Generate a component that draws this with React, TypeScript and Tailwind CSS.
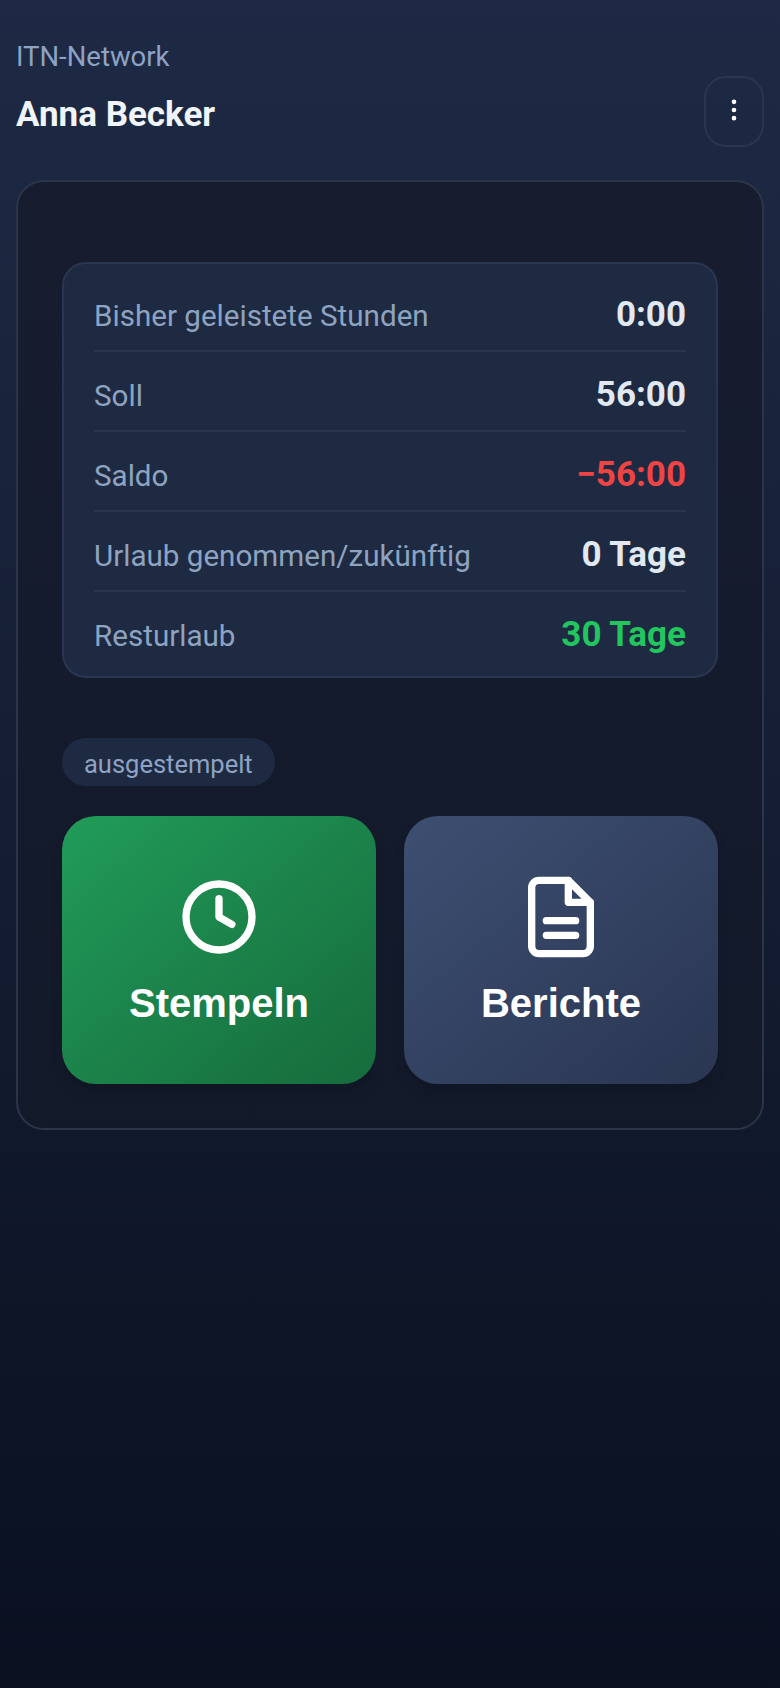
import React from 'react';
import { EllipsisVertical } from 'lucide-react';

const rows = [
  { label: 'Bisher geleistete Stunden', value: '0:00', color: 'text-[#e2e8f0]' },
  { label: 'Soll', value: '56:00', color: 'text-[#e2e8f0]' },
  { label: 'Saldo', value: '−56:00', color: 'text-[#ef4444]' },
  { label: 'Urlaub genommen/zukünftig', value: '0 Tage', color: 'text-[#e2e8f0]' },
  { label: 'Resturlaub', value: '30 Tage', color: 'text-[#22c55e]' },
];

export default function App() {
  return (
    <div className="min-h-[1688px] bg-gradient-to-b from-[#1e2a45] to-[#0a1020] px-4 pt-[39px] font-['Roboto',sans-serif]">
      <header className="flex items-end justify-between">
        <div className="pb-[10px]">
          <p className="text-[27.5px] leading-[36px] text-[#8ea3c4]">ITN-Network</p>
          <h1 className="mt-[18px] text-[35px] font-bold leading-[44px] text-[#f1f5f9]">Anna Becker</h1>
        </div>
        <button className="flex h-[71px] w-[60px] items-center justify-center rounded-[22px] border-2 border-[#2a3650]">
          <EllipsisVertical className="mb-[3px] h-[28px] w-[28px] text-white" />
        </button>
      </header>

      <main className="mt-[33px] rounded-[28px] border-2 border-[#2a3549] bg-gradient-to-b from-[#171d2f] to-[#121929] px-[44px] pb-[44px] pt-[80px]">
        <section className="rounded-[24px] border-2 border-[#2a3650] bg-[#1e2a42] px-[30px] pb-[4px] pt-[8px]">
          {rows.map((row, i) => (
            <div key={row.label} className={`flex h-[80px] items-baseline justify-between pt-[23px] ${i < rows.length - 1 ? 'border-b-2 border-[#2a3650]' : ''}`}>
              <span className="text-[29.6px] leading-[40px] text-[#8ea3c0]">{row.label}</span>
              <span className={`text-[35px] font-bold leading-[40px] ${row.color}`}>{row.value}</span>
            </div>
          ))}
        </section>

        <div className="mt-[60px] w-fit rounded-full bg-[#1e2a42] px-[22px] pb-[5px] pt-[9px] text-[25.5px] leading-[34px] text-[#8ea3c4]">ausgestempelt</div>

        <div className="mt-[30px] grid grid-cols-2 gap-7">
          <button className="flex h-[268px] flex-col items-center justify-center gap-[18px] rounded-[34px] bg-gradient-to-br from-[#219c59] to-[#166b3c] font-['Liberation_Sans',sans-serif] text-[40px] font-bold leading-[48px] text-white shadow-lg shadow-black/10">
            <svg width="88" height="88" viewBox="0 0 24 24" fill="none" stroke="currentColor" strokeWidth="2" strokeLinecap="round" strokeLinejoin="round">
              <circle cx="12" cy="12" r="9" />
              <path d="M12 7v5l3.5 2" />
            </svg>
            Stempeln
          </button>
          <button className="flex h-[268px] flex-col items-center justify-center gap-[18px] rounded-[34px] bg-gradient-to-br from-[#3d4f72] to-[#2a3652] font-['Liberation_Sans',sans-serif] text-[40px] font-bold leading-[48px] text-white shadow-lg shadow-black/10">
            <svg width="88" height="88" viewBox="0 0 24 24" fill="none" stroke="currentColor" strokeWidth="2" strokeLinecap="round" strokeLinejoin="round">
              <path d="M6 2h8l6 6v12a2 2 0 0 1-2 2H6a2 2 0 0 1-2-2V4a2 2 0 0 1 2-2z" />
              <path d="M14 2v6h6" />
              <path d="M8 13h8M8 17h8" />
            </svg>
            Berichte
          </button>
        </div>
      </main>
    </div>
  );
}
